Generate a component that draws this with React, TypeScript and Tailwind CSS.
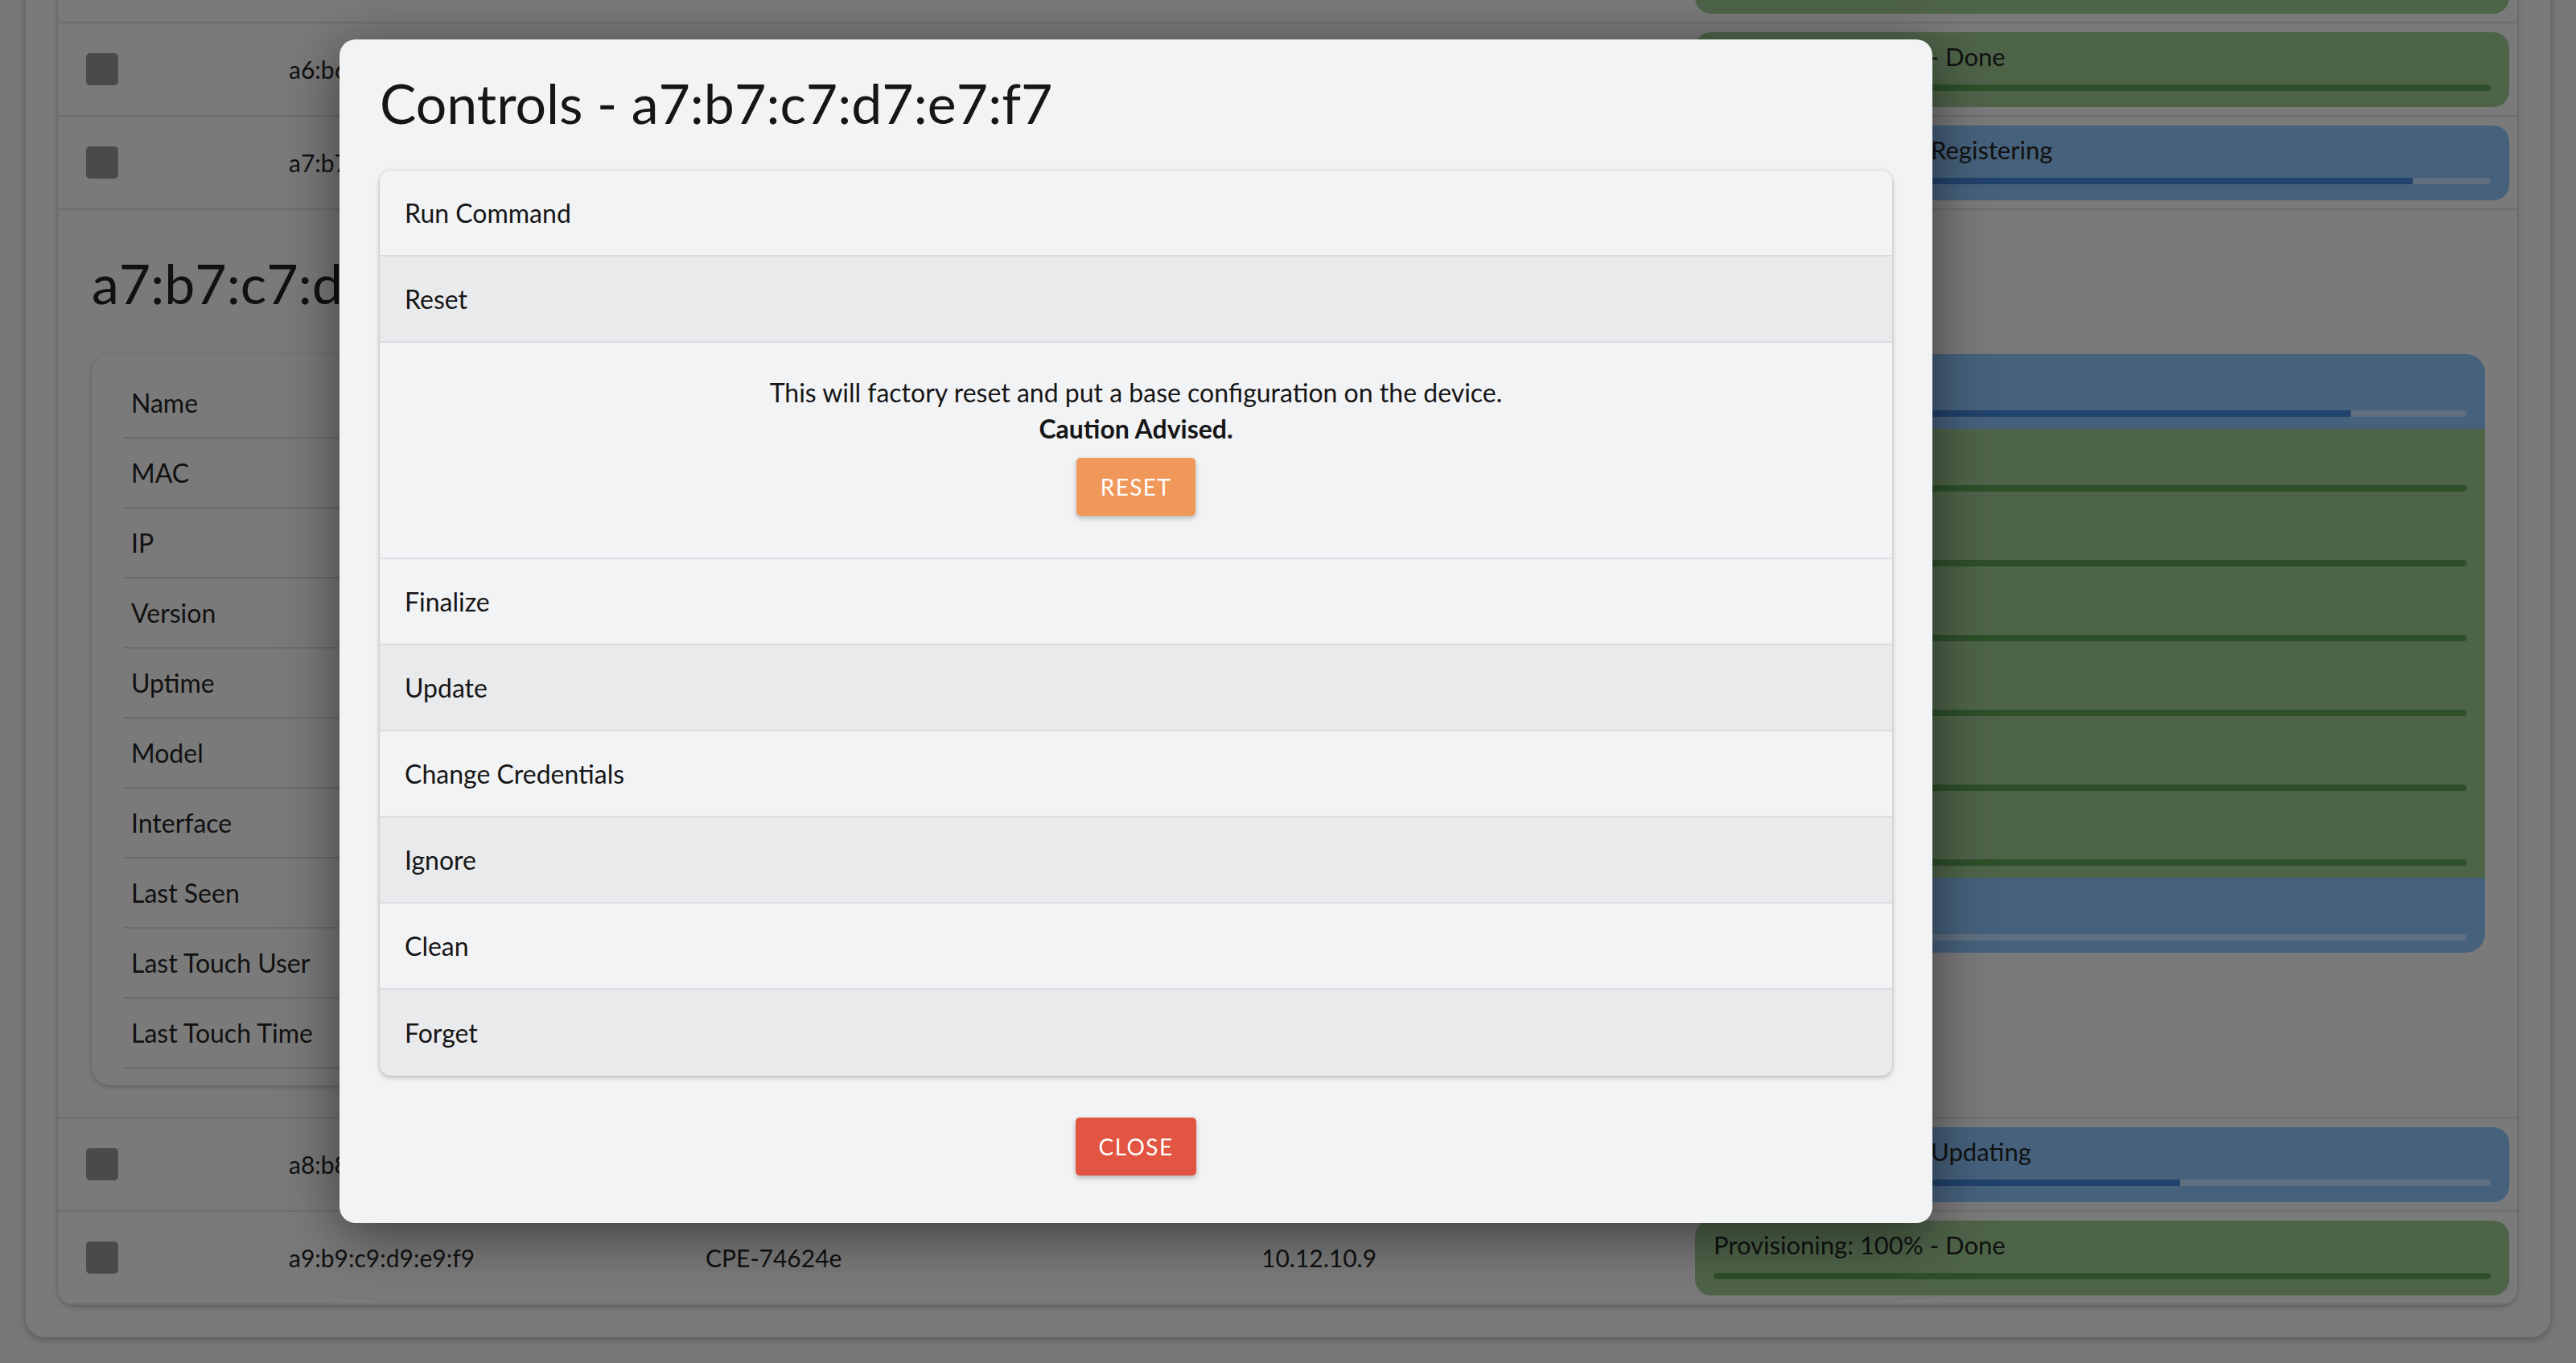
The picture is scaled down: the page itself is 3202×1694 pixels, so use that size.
import React from "react";

const font = { fontFamily: "Lato, 'Open Sans', 'Liberation Sans', sans-serif" };

type Tone = "green" | "blue";

const rows = [
  { mac: "a5:b5:c5:d5:e5:f5", name: "CPE-5b1e02", ip: "10.12.10.5", tone: "green" as Tone, pct: 100, step: "Done" },
  { mac: "a6:b6:c6:d6:e6:f6", name: "CPE-6c80a1", ip: "10.12.10.6", tone: "green" as Tone, pct: 100, step: "Done" },
  { mac: "a7:b7:c7:d7:e7:f7", name: "CPE-7a93f4", ip: "10.12.10.7", tone: "blue" as Tone, pct: 90, step: "Registering" },
];

const after = [
  { mac: "a8:b8:c8:d8:e8:f8", name: "CPE-8d21c7", ip: "10.12.10.8", tone: "blue" as Tone, pct: 60, step: "Updating" },
  { mac: "a9:b9:c9:d9:e9:f9", name: "CPE-74624e", ip: "10.12.10.9", tone: "green" as Tone, pct: 100, step: "Done" },
];

const details = [
  ["Name", "CPE-7a93f4"],
  ["MAC", "a7:b7:c7:d7:e7:f7"],
  ["IP", "10.12.10.7"],
  ["Version", "4.2.1"],
  ["Uptime", "3d 4h 12m"],
  ["Model", "AC-1200"],
  ["Interface", "eth0"],
  ["Last Seen", "2 minutes ago"],
  ["Last Touch User", "admin"],
  ["Last Touch Time", "10:42:18"],
];

const history = [
  { tone: "blue" as Tone, pct: 90, step: "Registering" },
  { tone: "green" as Tone, pct: 100, step: "Done" },
  { tone: "green" as Tone, pct: 100, step: "Done" },
  { tone: "green" as Tone, pct: 100, step: "Done" },
  { tone: "green" as Tone, pct: 100, step: "Done" },
  { tone: "green" as Tone, pct: 100, step: "Done" },
  { tone: "green" as Tone, pct: 100, step: "Done" },
  { tone: "blue" as Tone, pct: 0, step: "Queued" },
];

const controls = ["Run Command", "Reset", "Finalize", "Update", "Change Credentials", "Ignore", "Clean", "Forget"];

function Bar({ tone, pct, className = "" }: { tone: Tone; pct: number; className?: string }) {
  const green = tone === "green";
  return (
    <div className={`h-[8px] overflow-hidden rounded-full ${green ? "bg-[#3d5538]" : "bg-[#5f6f80]"} ${className}`}>
      <div className={`h-full ${green ? "bg-[#2e4f2a]" : "bg-[#21426c]"}`} style={{ width: `${pct}%` }} />
    </div>
  );
}

function Status({ tone, pct, step, className = "", barGap = "mt-[15px]" }: { tone: Tone; pct: number; step: string; className?: string; barGap?: string }) {
  return (
    <div className={`${tone === "green" ? "bg-[#4e6449]" : "bg-[#46617c]"} h-[93px] px-[23px] pt-[10px] ${className}`}>
      <div className="h-[40px] text-[31px] leading-[40px] text-[#111]">Provisioning: {pct}% - {step}</div>
      <Bar tone={tone} pct={pct} className={barGap} />
    </div>
  );
}

function DeviceRow({ mac, name, ip, tone, pct, step }: { mac: string; name: string; ip: string; tone: Tone; pct: number; step: string }) {
  return (
    <div className="grid h-[116px] grid-cols-[252px_518px_691px_539px_1012px] items-center border-b-2 border-[#6e6e6e] pl-[35px] text-[30px] text-[#111]">
      <div className="h-[40px] w-[40px] rounded-[5px] bg-[#4a4a4a]" />
      <div>{mac}</div>
      <div>{name}</div>
      <div>{ip}</div>
      <Status tone={tone} pct={pct} step={step} className="rounded-[20px]" />
    </div>
  );
}

function Detail() {
  return (
    <div className="border-b-2 border-[#6e6e6e] pb-[39px] pl-[42px] pr-[40px] pt-[50px] text-[#111]">
      <h2 className="text-[68px] leading-[82px]">a7:b7:c7:d7:e7:f7</h2>
      <div className="mt-[47px] grid grid-cols-[1446px_1fr] items-start gap-[40px]">
        <div className="rounded-[24px] bg-[#7a7a7a] pb-[21px] pl-[40px] pr-[40px] pt-[18px] shadow-[0_2px_6px_rgba(0,0,0,0.22)]">
          {details.map(([k, v]) => (
            <div key={k} className="grid h-[87px] grid-cols-[420px_1fr] items-center border-b-2 border-[#6b6b6b] pl-[9px] text-[32px]">
              <span>{k}</span>
              <span>{v}</span>
            </div>
          ))}
        </div>
        <div className="overflow-hidden rounded-[24px]">
          {history.map((h, i) => (
            <Status key={i} tone={h.tone} pct={h.pct} step={h.step} barGap="mt-[20px]" />
          ))}
        </div>
      </div>
    </div>
  );
}

export default function App() {
  return (
    <div className="relative h-[1694px] w-[3202px] overflow-hidden bg-[#777777]" style={font}>
      <div className="relative mx-[32px] -mt-[127px] w-[3138px] rounded-[24px] bg-[#7a7a7a] pb-[40px] pl-[40px] pr-[41px] pt-[40px] shadow-[0_3px_8px_rgba(0,0,0,0.25)]">
        <div className="overflow-hidden rounded-[20px] bg-[#7a7a7a] shadow-[0_2px_6px_rgba(0,0,0,0.25)]">
          {rows.map((r) => (
            <DeviceRow key={r.mac} {...r} />
          ))}
          <Detail />
          {after.map((r) => (
            <DeviceRow key={r.mac} {...r} />
          ))}
        </div>
      </div>

      {/* modal */}
      <div className="absolute left-[422px] top-[49px] w-[1980px] rounded-[20px] bg-[#f2f3f5] px-[50px] pb-[59px] pt-[38px] text-[#161616] shadow-[0_14px_70px_rgba(0,0,0,0.5)]">
        <h1 className="text-[68px] leading-[82px]">Controls - a7:b7:c7:d7:e7:f7</h1>
        <div className="mt-[43px] overflow-hidden rounded-[14px] shadow-[0_2px_6px_rgba(0,0,0,0.25),0_0_2px_rgba(0,0,0,0.15)]">
          {controls.map((c, i) => (
            <React.Fragment key={c}>
              <div
                className={`flex h-[107px] items-center pl-[31px] text-[32px] ${i % 2 ? "bg-[#e9eaec]" : "bg-[#f2f3f5]"} ${i < controls.length - 1 ? "border-b-2 border-[#dcdde0]" : ""}`}
              >
                {c}
              </div>
              {c === "Reset" && (
                <div className="flex flex-col items-center border-b-2 border-[#dcdde0] bg-[#f2f3f5] pb-[52px] pt-[39px] text-[32px] leading-[45px]">
                  <p>This will factory reset and put a base configuration on the device.</p>
                  <p className="font-bold">Caution Advised.</p>
                  <button className="mt-[14px] h-[72px] w-[148px] rounded-[5px] bg-[#f0975a] text-[28px] tracking-[0.05em] text-white shadow-[0_3px_6px_rgba(0,0,0,0.25)]">
                    RESET
                  </button>
                </div>
              )}
            </React.Fragment>
          ))}
        </div>
        <div className="mt-[52px] flex justify-center">
          <button className="h-[72px] w-[150px] rounded-[5px] bg-[#e25542] text-[28px] tracking-[0.05em] text-white shadow-[0_3px_6px_rgba(0,0,0,0.25)]">
            CLOSE
          </button>
        </div>
      </div>
    </div>
  );
}
